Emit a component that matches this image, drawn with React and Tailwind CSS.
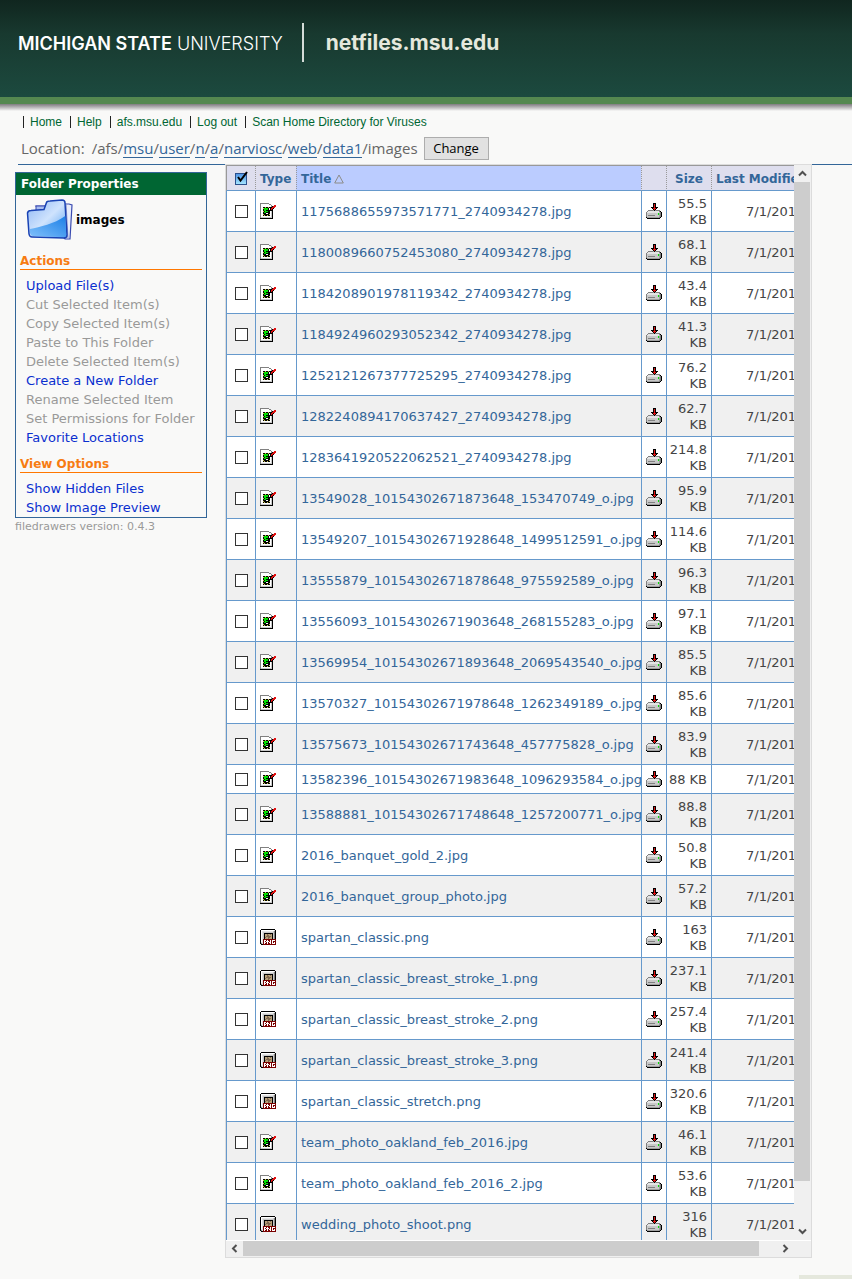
import { useRef } from "react";

const PALETTE = {
  g: "#808080",
  k: "#000000",
  w: "#ffffff",
  y: "#c8c050",
  G: "#00e000",
  D: "#303020",
  r: "#e01010",
  l: "#c8c8c8",
  m: "#a0a0a0",
  t: "#b8a078",
  b: "#806850",
  n: "#7a0000",
  s: "#e4e4e4",
};

const JPG = [
  "ggggggggg.......",
  "gwwwwwwwwgg.....",
  "gwwwwwwwwwwg..rr",
  "gwwwwwwwwwwgkrrr",
  "gwwkkykkykkkrrr.",
  "gwwyGGGGkwkrrk..",
  "gwwkGGGGkwkrk...",
  "gwwkGGkkkkkkk...",
  "gwwykGGGkkwlk...",
  "gwwkGGkkkkwlk...",
  "gwwkkkwwkkwlk...",
  "gwwykkkkkywlk...",
  "gwwkykkykkwlk...",
  "gwwwwwwwwwwlk...",
  "glllllllllllk...",
  "kkkkkkkkkkkkk...",
];

const PNG = [
  ".kkkkkkkkkkkkkk.",
  "kwwwwwwwwwwwwwsk",
  "kwssssssssssslgk",
  "kwslllllllllllgk",
  "kwslkkkkkkkkklgk",
  "kwslkttbttbtklgk",
  "kwslkttbbtttklgk",
  "kwslktbbbbbtklgk",
  "kwslkbttbbttklgk",
  "kwslktttbtttklgk",
  "kwsnnnnnnnnnnnnn",
  "kwsnwwnwnnwnwwwn",
  "kwsnwnwwwnwnwnnn",
  "kssnwwnwnwwnwnwn",
  "kgsnwnnwnnwnwwwn",
  ".kknnnnnnnnnnnnn",
];

const DRIVE = [
  ".......kkk......",
  ".......krk......",
  ".......krk......",
  ".......krk......",
  ".....kkkrkkk....",
  "......krrrk.....",
  ".......krk......",
  "..gggggmkmgggg..",
  ".gsssssssssssgk.",
  "gsssssssssssslgk",
  "glllllllllllGmgk",
  "glllllllllllGmgk",
  "glgggggggllllmgk",
  "gllllllllllllmgk",
  "kmmmmmmmmmmmmgk.",
  ".kkkkkkkkkkkkk..",
];

function PixelIcon({ rows, label }) {
  return (
    <svg viewBox="0 0 16 16" className="block h-4 w-4" shapeRendering="crispEdges" role="img" aria-label={label}>
      {rows.map((row, y) =>
        [...row].map((c, x) =>
          c === "." ? null : <rect key={x + "-" + y} x={x} y={y} width="1" height="1" fill={PALETTE[c]} />
        )
      )}
    </svg>
  );
}

function FolderIcon() {
  return (
    <svg viewBox="0 0 48 42" className="block h-[42px] w-12" aria-hidden="true">
      <defs>
        <linearGradient id="front" x1="0" y1="0" x2="1" y2="1">
          <stop offset="0" stopColor="#8db6f5" />
          <stop offset="0.5" stopColor="#cfe3fd" />
          <stop offset="1" stopColor="#4c9cf0" />
        </linearGradient>
        <linearGradient id="wave" x1="0" y1="1" x2="1" y2="0">
          <stop offset="0" stopColor="#7fc0fb" />
          <stop offset="1" stopColor="#1c7fe6" />
        </linearGradient>
      </defs>
      <path d="M10 7 h12 l3 -2 18 0 3 1 -2 34 -5 0z" fill="#e8ecfa" stroke="#3a4bb0" strokeWidth="1.2" />
      <path d="M10 7 v6 h10 v-6z" fill="#a9bdf0" stroke="#3a4bb0" />
      <path d="M40 4 l2 35" stroke="#8a94c8" fill="none" />
      <path d="M1.500 14 Q2 11.500 5 11.500 L18 10.500 L20.500 3.500 Q21 2 24 2 L36 1 Q39 1 39 4 L41 36 Q41 39 38 39 L6 38 Q3.500 38 3 35z" fill="url(#front)" stroke="#1a43b4" strokeWidth="1.500" />
      <path d="M4 30 C14 28 28 25 39.200 17 L40.200 36 Q40 38 38 38 L7 37 Q4.500 37 4 34z" fill="url(#wave)" />
    </svg>
  );
}

function CheckAllIcon() {
  return (
    <svg viewBox="0 0 14 15" className="block h-[15px] w-[14px]" aria-hidden="true">
      <defs>
        <linearGradient id="box" x1="0" y1="0" x2="0" y2="1">
          <stop offset="0" stopColor="#4a90e4" />
          <stop offset="1" stopColor="#a8e8ff" />
        </linearGradient>
      </defs>
      <rect x="0.500" y="2.500" width="11" height="11" fill="url(#box)" stroke="#2a4f8c" />
      <path d="M3 6 L5.500 9.500 L12 1" fill="none" stroke="#000" strokeWidth="2" />
    </svg>
  );
}

function Chevron({ d }) {
  return (
    <svg viewBox="0 0 9 9" className="block h-[9px] w-[9px]" aria-hidden="true">
      <path d={d} fill="none" stroke="#505050" strokeWidth="2" />
    </svg>
  );
}

const files = [
  ["1175688655973571771_2740934278.jpg", "55.5"],
  ["1180089660752453080_2740934278.jpg", "68.1"],
  ["1184208901978119342_2740934278.jpg", "43.4"],
  ["1184924960293052342_2740934278.jpg", "41.3"],
  ["1252121267377725295_2740934278.jpg", "76.2"],
  ["1282240894170637427_2740934278.jpg", "62.7"],
  ["1283641920522062521_2740934278.jpg", "214.8"],
  ["13549028_10154302671873648_153470749_o.jpg", "95.9"],
  ["13549207_10154302671928648_1499512591_o.jpg", "114.6"],
  ["13555879_10154302671878648_975592589_o.jpg", "96.3"],
  ["13556093_10154302671903648_268155283_o.jpg", "97.1"],
  ["13569954_10154302671893648_2069543540_o.jpg", "85.5"],
  ["13570327_10154302671978648_1262349189_o.jpg", "85.6"],
  ["13575673_10154302671743648_457775828_o.jpg", "83.9"],
  ["13582396_10154302671983648_1096293584_o.jpg", "88"],
  ["13588881_10154302671748648_1257200771_o.jpg", "88.8"],
  ["2016_banquet_gold_2.jpg", "50.8"],
  ["2016_banquet_group_photo.jpg", "57.2"],
  ["spartan_classic.png", "163"],
  ["spartan_classic_breast_stroke_1.png", "237.1"],
  ["spartan_classic_breast_stroke_2.png", "257.4"],
  ["spartan_classic_breast_stroke_3.png", "241.4"],
  ["spartan_classic_stretch.png", "320.6"],
  ["team_photo_oakland_feb_2016.jpg", "46.1"],
  ["team_photo_oakland_feb_2016_2.jpg", "53.6"],
  ["wedding_photo_shoot.png", "316"],
];

const navLinks = ["Home", "Help", "afs.msu.edu", "Log out", "Scan Home Directory for Viruses"];
const crumbs = ["msu", "user", "n", "a", "narviosc", "web", "data1"];

const actions = [
  ["Upload File(s)", true],
  ["Cut Selected Item(s)", false],
  ["Copy Selected Item(s)", false],
  ["Paste to This Folder", false],
  ["Delete Selected Item(s)", false],
  ["Create a New Folder", true],
  ["Rename Selected Item", false],
  ["Set Permissions for Folder", false],
  ["Favorite Locations", true],
];
const viewOptions = [
  ["Show Hidden Files", true],
  ["Show Image Preview", true],
];

function Section({ title, items }) {
  return (
    <section className="mx-1 mt-[9px]">
      <h3 className="border-b border-[#ff7700] text-[12px] leading-4 font-bold text-[#f77c12]">{title}</h3>
      <ul className="mt-[6px] pl-[6px] leading-[19px] whitespace-nowrap">
        {items.map(([label, on]) => (
          <li key={label}>
            {on ? (
              <a href="#" className="text-[#0a2fcf]">{label}</a>
            ) : (
              <span className="text-[#999999]">{label}</span>
            )}
          </li>
        ))}
      </ul>
    </section>
  );
}

const cell = "border-b border-l border-[#6699cc]";
const head = "border-b border-l border-b-[#6699cc] border-l-[#999999] [border-left-style:dotted]";

export default function App() {
  const area = useRef(null);
  const scroll = (x, y) => area.current.scrollBy(x, y);

  return (
    <div className="flex h-screen flex-col bg-[#f9f9f8] font-['DejaVu_Sans',sans-serif] text-[13px] text-[#444444]">
      <header className="h-[97px] shrink-0 bg-linear-to-b from-[#10261f] via-[#18392f] via-35% to-[#1c4a3f] pt-[23px] pl-[18px]">
        <div className="flex h-[39px] items-center font-[Inter,sans-serif] whitespace-nowrap">
          <div className="pt-[2px] text-[18px] text-white">
            <span className="font-semibold">MICHIGAN STATE</span> <span className="font-light">UNIVERSITY</span>
          </div>
          <div className="ml-[19px] h-full w-[2px] bg-[#d5dcd8]" />
          <h1 className="ml-[22px] text-[21px] font-bold text-[#e5e8dd]">netfiles.msu.edu</h1>
        </div>
      </header>
      <div className="h-[7px] shrink-0 bg-[#558850]" />
      <div className="h-[7px] shrink-0 bg-linear-to-b from-[#807c80] to-[#f9f9f8]" />

      <nav className="flex h-[21px] shrink-0 items-center pl-[23px] font-['Liberation_Sans',sans-serif] text-[12px]">
        {navLinks.map((label) => (
          <span key={label} className="flex items-center">
            <span className="h-3 w-px bg-[#222222]" />
            <a href="#" className="mr-[8px] ml-[6px] text-[#006633]">{label}</a>
          </span>
        ))}
      </nav>

      <div className="ml-[18px] flex h-[33px] shrink-0 items-center border-b border-[#336699] pl-[3px] font-['Open_Sans',sans-serif] text-[15px] text-[#666666]">
        <span className="mr-[7px]">Location:</span>
        <span>/afs/</span>
        {crumbs.map((c) => (
          <span key={c}>
            <a href="#" className="inline-block border-b border-[#336699] leading-[17px] text-[#336699]">{c}</a>/
          </span>
        ))}
        <span>images</span>
        <button type="button" className="ml-[6px] h-[23px] w-[65px] border border-[#adadad] bg-[#e1e1e1] text-[13px] leading-none text-black">
          Change
        </button>
      </div>

      <main className="-mt-px flex min-h-0 flex-1 pr-10 pl-[15px]">
        <aside className="w-48 shrink-0 pt-2">
          <div className="border border-[#336699]">
            <h2 className="bg-[#006633] pl-[5px] text-[12px] leading-[22px] font-bold text-white">Folder Properties</h2>
            <div className="flex h-[49px] items-center pl-[10px]">
              <FolderIcon />
              <span className="ml-[2px] text-[12px] font-bold text-black">images</span>
            </div>
            <Section title="Actions" items={actions} />
            <Section title="View Options" items={viewOptions} />
          </div>
          <p className="pt-[3px] text-[11px] leading-3 whitespace-nowrap text-[#999999]">filedrawers version: 0.4.3</p>
        </aside>

        <div className="ml-[18px] flex min-w-0 flex-1 flex-col border border-[#dcdcdc] bg-[#f0f0f0]">
          <div className="flex min-h-0 flex-1 border-b border-white">
            <div ref={area} className="min-w-0 flex-1 overflow-auto bg-white [scrollbar-width:none]">
              <table className="w-[589px] min-w-full table-fixed border-separate border-spacing-0 border-t border-[#999999] leading-4 whitespace-nowrap">
                <colgroup>
                  <col className="w-[29px]" />
                  <col className="w-[41px]" />
                  <col />
                  <col className="w-[25px]" />
                  <col className="w-[45px]" />
                  <col className="w-[104px]" />
                </colgroup>
                <thead className="text-left text-[12px] text-[#336699]">
                  <tr className="h-[25px] bg-[#dedeee]">
                    <th className="border-b border-l border-b-[#6699cc] border-l-[#999999] pl-2">
                      <button type="button" aria-label="Select all" className="block"><CheckAllIcon /></button>
                    </th>
                    <th className={head + " pt-[2px] pl-1"}><a href="#">Type</a></th>
                    <th className={head + " bg-[#bbccff] pt-[2px] pl-1"}>
                      <a href="#" className="flex items-center">
                        Title
                        <svg viewBox="0 0 10 10" className="ml-[3px] h-[10px] w-[10px]" aria-hidden="true">
                          <path d="M5 1 L9.300 9 H0.700z" fill="none" stroke="#8c8c88" />
                        </svg>
                      </a>
                    </th>
                    <th className={head} aria-label="Download" />
                    <th className={head + " pt-[2px] text-center"}><a href="#">Size</a></th>
                    <th className={head + " pt-[2px] pl-1"}><a href="#">Last Modified</a></th>
                  </tr>
                </thead>
                <tbody>
                  {files.map(([name, size]) => (
                    <tr key={name} className="h-[29px] bg-white even:bg-[#f0f0f0]">
                      <td className={cell + " pl-2"}>
                        <input
                          type="checkbox"
                          aria-label={"Select " + name}
                          className="block h-[13px] w-[13px] appearance-none border border-[#333333] bg-white checked:bg-[#336699]"
                        />
                      </td>
                      <td className={cell + " pl-1"}>
                        <PixelIcon rows={name.endsWith("png") ? PNG : JPG} label="Image file" />
                      </td>
                      <td className={cell + " pt-[2px] pl-1"}><a href="#" className="text-[#336699]">{name}</a></td>
                      <td className={cell + " pl-1"}>
                        <a href="#" aria-label={"Download " + name}><PixelIcon rows={DRIVE} label="Download" /></a>
                      </td>
                      <td className={cell + " pt-[2px] pr-1 text-right"}>
                        {size === "88" ? "88 KB" : <div className="py-[3px]">{size}<br />KB</div>}
                      </td>
                      <td className={cell + " pt-[2px] pl-[34px]"}>7/1/2016</td>
                    </tr>
                  ))}
                </tbody>
              </table>
            </div>
            <div className="flex w-[17px] shrink-0 flex-col pr-px">
              <button type="button" aria-label="Scroll up" onClick={() => scroll(0, -41)} className="flex h-[17px] items-center justify-center">
                <Chevron d="M1 6.500 L4.500 3 L8 6.500" />
              </button>
              <div className="flex min-h-0 flex-1 flex-col">
                <div className="h-24/25 bg-[#cdcdcd]" />
              </div>
              <button type="button" aria-label="Scroll down" onClick={() => scroll(0, 41)} className="flex h-[17px] items-center justify-center">
                <Chevron d="M1 2.500 L4.500 6 L8 2.500" />
              </button>
            </div>
          </div>
          <div className="flex h-4 shrink-0 pr-[17px] pb-px">
            <button type="button" aria-label="Scroll left" onClick={() => scroll(-40, 0)} className="flex w-[17px] items-center justify-center">
              <Chevron d="M6.500 1 L3 4.500 L6.500 8" />
            </button>
            <div className="flex min-w-0 flex-1">
              <div className="w-29/30 bg-[#cdcdcd]" />
            </div>
            <button type="button" aria-label="Scroll right" onClick={() => scroll(40, 0)} className="flex w-[17px] items-center justify-center">
              <Chevron d="M2.500 1 L6 4.500 L2.500 8" />
            </button>
          </div>
        </div>
      </main>

      <footer className="flex h-[21px] shrink-0 items-end justify-end">
        <div className="h-1 w-[53px] bg-[#e5e8dd]" />
      </footer>
    </div>
  );
}
